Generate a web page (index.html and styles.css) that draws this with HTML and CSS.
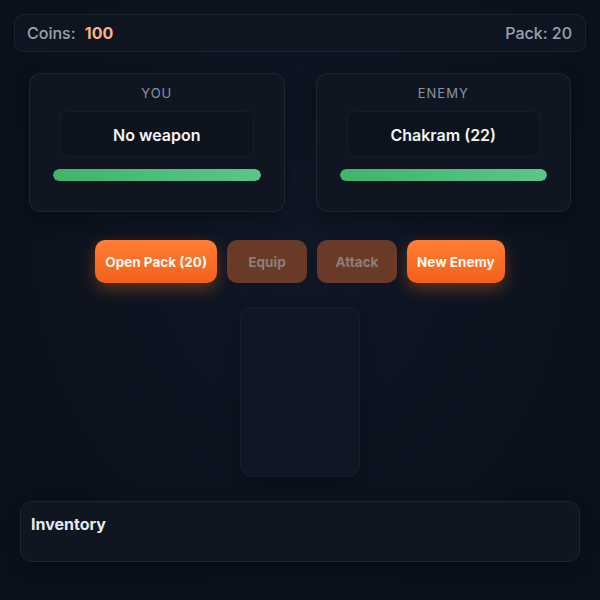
FILE: index.html
```html
<!DOCTYPE html>
<html>
<head>
<meta charset="utf-8">
<link rel="stylesheet" href="styles.css">
</head>
<body>
<div class="app">
  <div class="topbar">
    <div class="coins">Coins: <span class="coin-val">100</span></div>
    <div class="pack">Pack: 20</div>
  </div>
  <div class="fighters">
    <div class="fighter">
      <div class="label">YOU</div>
      <div class="weapon">No weapon</div>
      <div class="hp"><div class="hp-fill"></div></div>
    </div>
    <div class="fighter">
      <div class="label">ENEMY</div>
      <div class="weapon">Chakram (22)</div>
      <div class="hp"><div class="hp-fill"></div></div>
    </div>
  </div>
  <div class="actions">
    <button class="btn btn-active">Open Pack (20)</button>
    <button class="btn btn-disabled w80">Equip</button>
    <button class="btn btn-disabled w80">Attack</button>
    <button class="btn btn-active">New Enemy</button>
  </div>
  <div class="card-slot"></div>
  <div class="inventory">
    <div class="inv-title">Inventory</div>
  </div>
</div>
</body>
</html>
```
FILE: styles.css
```css
* { box-sizing: border-box; }
html, body { margin: 0; padding: 0; }
body {
  width: 600px;
  height: 600px;
  background: radial-gradient(ellipse at 50% 40%, #0f1726 0%, #0b111c 70%);
  background-color: #0b111c;
  font-family: Inter, "Noto Sans", sans-serif;
  color: #f1f5f9;
  overflow: hidden;
}
.app {
  padding-top: 14px;
  display: flex;
  flex-direction: column;
}
.topbar {
  margin: 0 14px;
  height: 38px;
  padding: 0 13px 0 12px;
  border-radius: 10px;
  background: #0f1520;
  border: 1px solid rgba(255,255,255,0.06);
  display: flex;
  align-items: center;
  justify-content: space-between;
  font-size: 16px;
  font-weight: 500;
  color: #9aa3b2;
}
.coin-val {
  color: #fbb48a;
  font-weight: 700;
  margin-left: 5px;
}
.fighters {
  margin-top: 21px;
  padding: 0 29px;
  display: flex;
  gap: 31px;
}
.fighter {
  flex: 1;
  height: 139px;
  border-radius: 12px;
  background: #0f1622;
  border: 1px solid rgba(255,255,255,0.07);
  box-shadow: 0 6px 18px rgba(0,0,0,0.35);
  padding: 11px 23px 0;
  display: flex;
  flex-direction: column;
}
.label {
  text-align: center;
  font-size: 13px;
  letter-spacing: 1px;
  color: #8b93a1;
  line-height: 16px;
}
.weapon {
  margin: 10px 7px 0;
  height: 46px;
  padding-top: 2px;
  border-radius: 8px;
  background: #0d131d;
  border: 1px solid rgba(255,255,255,0.04);
  display: flex;
  align-items: center;
  justify-content: center;
  font-size: 16px;
  font-weight: 600;
  color: #f3f4f6;
}
.hp {
  margin-top: 12px;
  height: 12px;
  border-radius: 6px;
  background: #1c2533;
  overflow: hidden;
}
.hp-fill {
  width: 100%;
  height: 100%;
  border-radius: 6px;
  background: linear-gradient(90deg, #3fb56a, #5cc489);
}
.actions {
  margin-top: 28px;
  display: flex;
  justify-content: center;
  gap: 10px;
}
.btn {
  height: 43px;
  border: none;
  border-radius: 10px;
  font-family: Inter, "Noto Sans", sans-serif;
  font-size: 13.5px;
  font-weight: 700;
  padding: 0 10px;
}
.btn-active {
  background: linear-gradient(180deg, #ff7e33, #f2611c);
  color: #fff7f0;
  box-shadow: 0 6px 16px rgba(249,115,22,0.35);
}
.btn-disabled {
  background: #6a3a28;
  color: #8c7f7a;
}
.w80 { width: 80px; }
.card-slot {
  margin: 24px auto 0;
  width: 120px;
  height: 170px;
  border-radius: 12px;
  background: #0f1724;
  border: 1px solid rgba(255,255,255,0.035);
  box-shadow: 0 6px 18px rgba(0,0,0,0.3);
}
.inventory {
  margin: 24px 20px 0;
  height: 61px;
  border-radius: 12px;
  background: #0f1622;
  border: 1px solid rgba(255,255,255,0.06);
  box-shadow: 0 6px 18px rgba(0,0,0,0.35);
  padding: 12px 10px;
}
.inv-title {
  font-size: 16px;
  font-weight: 700;
  color: #e5e9f0;
}
```
